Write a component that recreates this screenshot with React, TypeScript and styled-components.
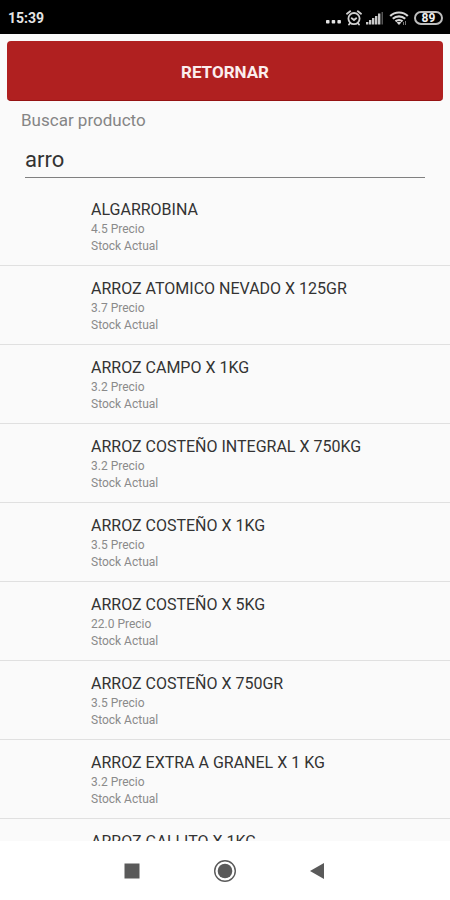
import React, { useState } from "react";
import styled, { createGlobalStyle } from "styled-components";

const GlobalStyle = createGlobalStyle`
  *, *::before, *::after { box-sizing: border-box; }
  body {
    margin: 0;
    background: #fafafa;
    font-family: Roboto, "Liberation Sans", sans-serif;
  }
`;

const Screen = styled.div`
  display: flex;
  flex-direction: column;
  height: 100vh;
  overflow: hidden;
`;

const StatusBar = styled.header`
  display: flex;
  flex: none;
  align-items: center;
  justify-content: space-between;
  height: 34px;
  padding: 2px 7px 0 8px;
  background: #000;
  color: #e4e4e4;
`;

const Clock = styled.time`
  font-size: 14px;
  font-weight: 700;
  line-height: 16px;
`;

const StatusIcons = styled.div`
  display: flex;
  align-items: center;
  gap: 4px;

  svg { display: block; }
`;

const Battery = styled.span`
  display: flex;
  align-items: center;
  justify-content: center;
  width: 29px;
  height: 14px;
  margin-left: 1px;
  border: 2px solid #bdbdbd;
  border-radius: 7px;
  color: #f0f0f0;
  font-size: 12px;
  font-weight: 700;
  line-height: 12px;
`;

const SearchPanel = styled.section`
  display: flex;
  flex: none;
  flex-direction: column;
  padding: 7px 7px 0;
`;

const ReturnButton = styled.button`
  height: 60px;
  padding: 2px 0 0;
  border: 0;
  border-bottom: 1px solid #951313;
  border-radius: 4px;
  background: #b02020;
  color: #fbeeee;
  font-family: inherit;
  font-size: 17px;
  font-weight: 700;
  line-height: 20px;
`;

const SearchLabel = styled.label`
  margin: 8px 14px 0;
  color: #858585;
  font-size: 17px;
  line-height: 22px;
`;

const SearchInput = styled.input`
  height: 36px;
  margin: 11px 18px 0;
  padding: 0 0 1px;
  border: 0;
  border-bottom: 1px solid #808080;
  border-radius: 0;
  outline: 0;
  background: transparent;
  color: #333;
  font-family: inherit;
  font-size: 22px;
  line-height: 24px;
`;

const ProductList = styled.ul`
  flex: 1;
  min-height: 0;
  margin: 0;
  padding: 9px 0 0;
  overflow: hidden;
  list-style: none;
`;

const ProductRow = styled.li`
  display: flex;
  flex-direction: column;
  height: 79px;
  padding: 12px 16px 0 91px;
  border-bottom: 1px solid #e0e0e0;
`;

const ProductName = styled.span`
  color: #333;
  font-size: 16px;
  line-height: 22px;
`;

const ProductDetail = styled.span`
  color: #8a8a8a;
  font-size: 12px;
  line-height: 17px;
`;

const NavigationBar = styled.nav`
  display: grid;
  flex: none;
  grid-template-columns: repeat(3, 93px);
  justify-content: center;
  height: 59px;
  background: #fff;
`;

const NavigationButton = styled.button`
  display: flex;
  align-items: center;
  justify-content: center;
  padding: 0;
  border: 0;
  background: none;
  color: #5a5a5a;
`;

const products = [
  { name: "ALGARROBINA", price: "4.5" },
  { name: "ARROZ ATOMICO NEVADO X 125GR", price: "3.7" },
  { name: "ARROZ CAMPO X 1KG", price: "3.2" },
  { name: "ARROZ COSTEÑO INTEGRAL X 750KG", price: "3.2" },
  { name: "ARROZ COSTEÑO X 1KG", price: "3.5" },
  { name: "ARROZ COSTEÑO X 5KG", price: "22.0" },
  { name: "ARROZ COSTEÑO X 750GR", price: "3.5" },
  { name: "ARROZ EXTRA A GRANEL X 1 KG", price: "3.2" },
  { name: "ARROZ GALLITO X 1KG" },
];

const MoreIcon = () => (
  <svg width="16" height="16" viewBox="0 0 16 16" fill="#e4e4e4" aria-hidden="true">
    <rect x="0" y="10" width="3.5" height="3.5" rx="0.8" />
    <rect x="5.7" y="10" width="3.5" height="3.5" rx="0.8" />
    <rect x="11.4" y="10" width="3.5" height="3.5" rx="0.8" />
  </svg>
);

const AlarmIcon = () => (
  <svg width="16" height="16" viewBox="0 0 16 16" fill="none" stroke="#d0d0d0" strokeWidth="1.8" strokeLinecap="round" aria-hidden="true">
    <circle cx="8" cy="8.6" r="5.6" />
    <path d="M1 3.8 4.2 1.2M15 3.8l-3.2-2.6M5.7 8.2 8 10l2.2-1.8M4 13.2l-1 1.4M12 13.2l1 1.4" />
  </svg>
);

const SignalIcon = () => (
  <svg width="19" height="16" viewBox="0 0 19 16" fill="#c8c8c8" aria-hidden="true">
    <path d="M0 12h2.4v2.4H0zM3 10h2.4v4.4H3zM6 8h2.4v6.4H6zM9 6h2.4v8.4H9zM12 3.5h2.4v10.9H12z" />
    <path d="M15.5 2H17v12.4h-1.5z" fill="#555" />
  </svg>
);

const WifiIcon = () => (
  <svg width="20" height="16" viewBox="0 0 20 16" fill="none" stroke="#d8d8d8" strokeWidth="2.2" aria-hidden="true">
    <path d="M1.2 6C6 1.3 14 1.3 18.8 6M3.8 8.8c3.5-3.3 8.9-3.3 12.4 0M6.5 11.4c2-1.8 5-1.8 7 0" />
    <path d="M7.6 12.4 10 15l2.4-2.6c-1.3-1-3.5-1-4.8 0Z" fill="#d8d8d8" stroke="none" />
    <path d="M14.5 12v3M16.5 11v4" stroke="#777" strokeWidth="1" />
  </svg>
);

const RecentIcon = () => (
  <svg width="24" height="24" viewBox="0 0 24 24" aria-hidden="true">
    <rect x="4.5" y="4.5" width="15" height="15" fill="currentColor" />
  </svg>
);

const HomeIcon = () => (
  <svg width="24" height="24" viewBox="0 0 24 24" aria-hidden="true">
    <circle cx="12" cy="12" r="10.3" fill="none" stroke="currentColor" strokeWidth="1.4" />
    <circle cx="12" cy="12" r="7.3" fill="currentColor" />
  </svg>
);

const BackIcon = () => (
  <svg width="24" height="24" viewBox="0 0 24 24" aria-hidden="true">
    <path d="M4 12 18 4v16Z" fill="currentColor" />
  </svg>
);

export default function App() {
  const [query, setQuery] = useState("arro");

  return (
    <>
      <GlobalStyle />
      <Screen>
        <StatusBar>
          <Clock>15:39</Clock>
          <StatusIcons>
            <MoreIcon />
            <AlarmIcon />
            <SignalIcon />
            <WifiIcon />
            <Battery>89</Battery>
          </StatusIcons>
        </StatusBar>
        <SearchPanel>
          <ReturnButton type="button">RETORNAR</ReturnButton>
          <SearchLabel htmlFor="product-search">Buscar producto</SearchLabel>
          <SearchInput
            id="product-search"
            type="text"
            value={query}
            onChange={(event) => setQuery(event.target.value)}
          />
        </SearchPanel>
        <ProductList>
          {products.map(({ name, price }) => (
            <ProductRow key={name}>
              <ProductName>{name}</ProductName>
              {price && (
                <>
                  <ProductDetail>{price} Precio</ProductDetail>
                  <ProductDetail>Stock Actual</ProductDetail>
                </>
              )}
            </ProductRow>
          ))}
        </ProductList>
        <NavigationBar>
          <NavigationButton type="button" aria-label="Recientes"><RecentIcon /></NavigationButton>
          <NavigationButton type="button" aria-label="Inicio"><HomeIcon /></NavigationButton>
          <NavigationButton type="button" aria-label="Atrás"><BackIcon /></NavigationButton>
        </NavigationBar>
      </Screen>
    </>
  );
}
